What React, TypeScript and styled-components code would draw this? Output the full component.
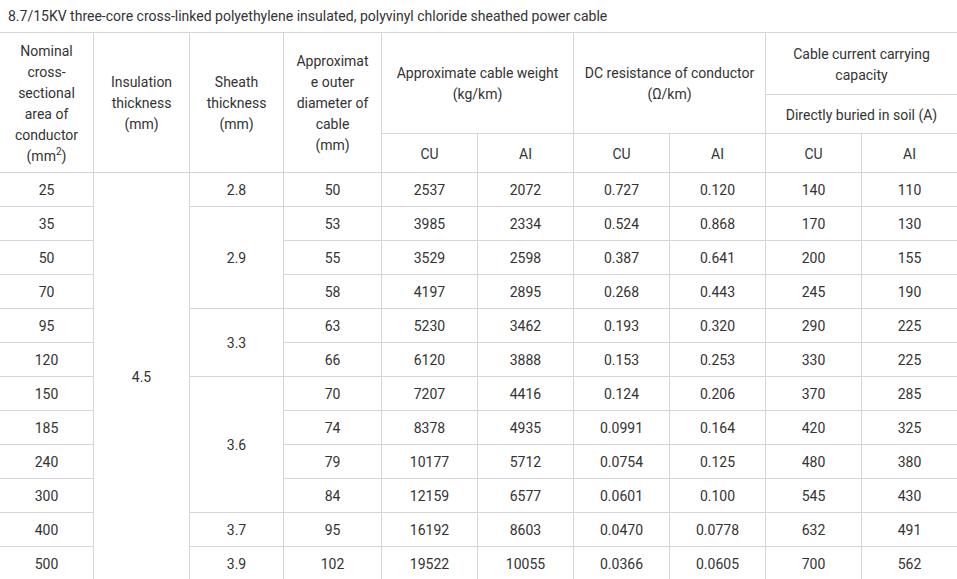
import React from "react";
import styled, { createGlobalStyle } from "styled-components";

const Global = createGlobalStyle`
  html, body { margin: 0; padding: 0; background: #fff; overflow: hidden; }
  body { font-family: Roboto, "Noto Sans", Arial, sans-serif; color: #333; }
`;

const Page = styled.div`
  width: 957px;
  overflow: hidden;
`;

const Title = styled.div`
  height: 32px;
  line-height: 32px;
  padding-left: 8px;
  font-size: 14px;
  color: #333;
  white-space: nowrap;
`;

const Table = styled.table`
  border-collapse: collapse;
  table-layout: fixed;
  width: 958px;
  margin-left: -1px;
  font-size: 14px;
  line-height: 21px;
  color: #333;
`;

const HeadRow = styled.tr<{ $h: number }>`
  height: ${(p) => p.$h}px;
`;

const Row = styled.tr`
  height: 34px;
`;

const Th = styled.th`
  font-weight: 400;
  border: 1px solid #d6d6da;
  padding: 7px 10px 5px;
  text-align: center;
  vertical-align: middle;
  word-break: break-word;
  overflow-wrap: anywhere;
`;

const Td = styled.td`
  border: 1px solid #d6d6da;
  padding: 7px 10px 5px;
  text-align: center;
  vertical-align: middle;
`;

const Sup = styled.sup`
  font-size: 10px;
  line-height: 0;
`;

const widths = [94, 96, 94, 98, 96, 96, 96, 96, 96, 96];

type RowData = {
  area: string;
  sheath?: { v: string; span: number };
  dia: string;
  wcu: string;
  wal: string;
  rcu: string;
  ral: string;
  ccu: string;
  cal: string;
};

const rows: RowData[] = [
  { area: "25", sheath: { v: "2.8", span: 1 }, dia: "50", wcu: "2537", wal: "2072", rcu: "0.727", ral: "0.120", ccu: "140", cal: "110" },
  { area: "35", sheath: { v: "2.9", span: 3 }, dia: "53", wcu: "3985", wal: "2334", rcu: "0.524", ral: "0.868", ccu: "170", cal: "130" },
  { area: "50", dia: "55", wcu: "3529", wal: "2598", rcu: "0.387", ral: "0.641", ccu: "200", cal: "155" },
  { area: "70", dia: "58", wcu: "4197", wal: "2895", rcu: "0.268", ral: "0.443", ccu: "245", cal: "190" },
  { area: "95", sheath: { v: "3.3", span: 2 }, dia: "63", wcu: "5230", wal: "3462", rcu: "0.193", ral: "0.320", ccu: "290", cal: "225" },
  { area: "120", dia: "66", wcu: "6120", wal: "3888", rcu: "0.153", ral: "0.253", ccu: "330", cal: "225" },
  { area: "150", sheath: { v: "3.6", span: 4 }, dia: "70", wcu: "7207", wal: "4416", rcu: "0.124", ral: "0.206", ccu: "370", cal: "285" },
  { area: "185", dia: "74", wcu: "8378", wal: "4935", rcu: "0.0991", ral: "0.164", ccu: "420", cal: "325" },
  { area: "240", dia: "79", wcu: "10177", wal: "5712", rcu: "0.0754", ral: "0.125", ccu: "480", cal: "380" },
  { area: "300", dia: "84", wcu: "12159", wal: "6577", rcu: "0.0601", ral: "0.100", ccu: "545", cal: "430" },
  { area: "400", sheath: { v: "3.7", span: 1 }, dia: "95", wcu: "16192", wal: "8603", rcu: "0.0470", ral: "0.0778", ccu: "632", cal: "491" },
  { area: "500", sheath: { v: "3.9", span: 1 }, dia: "102", wcu: "19522", wal: "10055", rcu: "0.0366", ral: "0.0605", ccu: "700", cal: "562" },
];

export default function App() {
  return (
    <Page>
      <Global />
      <Title>8.7/15KV three-core cross-linked polyethylene insulated, polyvinyl chloride sheathed power cable</Title>
      <Table>
        <colgroup>
          {widths.map((w, i) => (
            <col key={i} style={{ width: w }} />
          ))}
        </colgroup>
        <thead>
          <HeadRow $h={62}>
            <Th rowSpan={3}>
              Nominal cross-sectional area of conductor (mm<Sup>2</Sup>)
            </Th>
            <Th rowSpan={3}>Insulation thickness (mm)</Th>
            <Th rowSpan={3}>Sheath thickness (mm)</Th>
            <Th rowSpan={3}>
              Approximate outer diameter of cable
              <br />
              (mm)
            </Th>
            <Th colSpan={2} rowSpan={2}>
              Approximate cable weight (kg/km)
            </Th>
            <Th colSpan={2} rowSpan={2}>
              DC resistance of conductor (Ω/km)
            </Th>
            <Th colSpan={2}>Cable current carrying capacity</Th>
          </HeadRow>
          <HeadRow $h={39}>
            <Th colSpan={2}>Directly buried in soil (A)</Th>
          </HeadRow>
          <HeadRow $h={39}>
            <Th>CU</Th>
            <Th>AI</Th>
            <Th>CU</Th>
            <Th>AI</Th>
            <Th>CU</Th>
            <Th>AI</Th>
          </HeadRow>
        </thead>
        <tbody>
          {rows.map((r, i) => (
            <Row key={r.area}>
              <Td>{r.area}</Td>
              {i === 0 && <Td rowSpan={12}>4.5</Td>}
              {r.sheath && <Td rowSpan={r.sheath.span}>{r.sheath.v}</Td>}
              <Td>{r.dia}</Td>
              <Td>{r.wcu}</Td>
              <Td>{r.wal}</Td>
              <Td>{r.rcu}</Td>
              <Td>{r.ral}</Td>
              <Td>{r.ccu}</Td>
              <Td>{r.cal}</Td>
            </Row>
          ))}
        </tbody>
      </Table>
    </Page>
  );
}
